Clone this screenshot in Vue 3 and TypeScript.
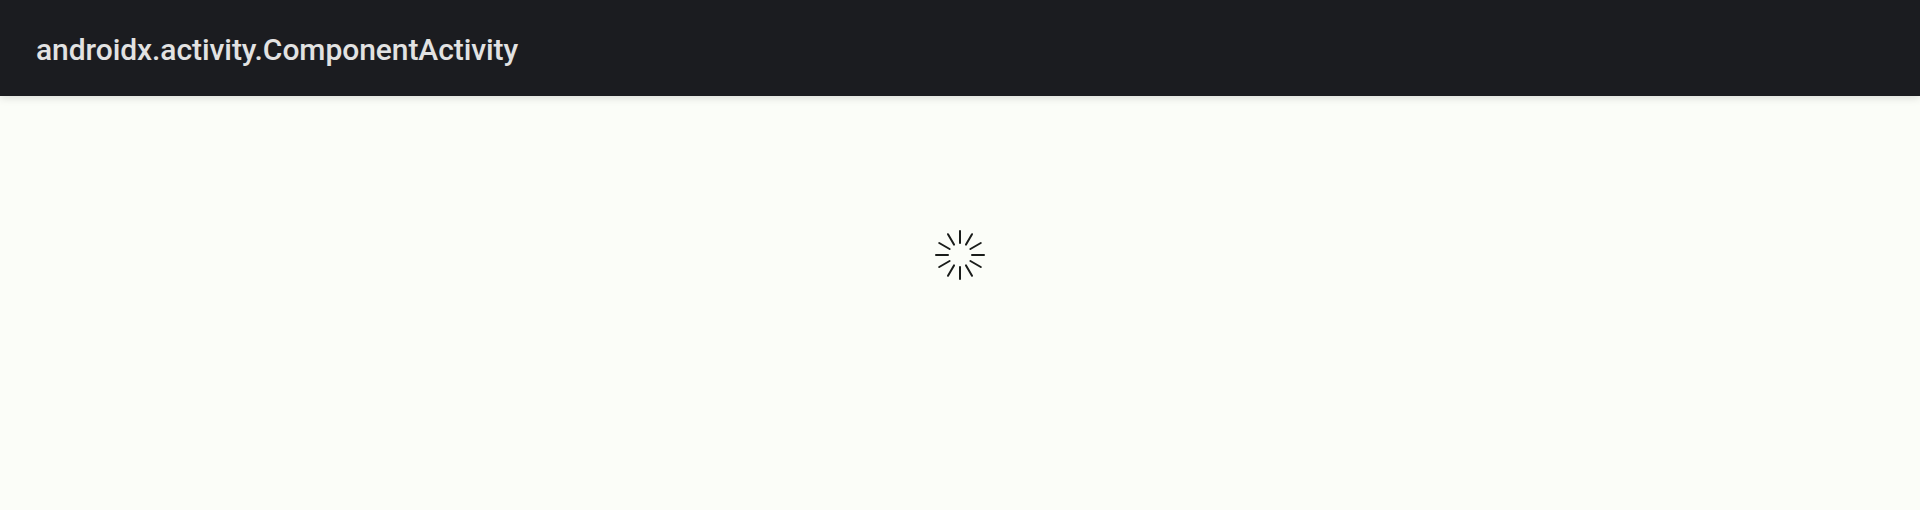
<script setup lang="ts">
const angles: number[] = Array.from({ length: 12 }, (_, i) => i * 30)
</script>

<template>
  <div class="screen">
    <header class="bar"><h1 class="title">androidx.activity.ComponentActivity</h1></header>
    <main class="content">
      <svg class="spinner" width="52" height="52" viewBox="-26 -26 52 52" aria-label="Loading">
        <line v-for="a in angles" :key="a" x1="0" y1="-12" x2="0" y2="-24" :transform="`rotate(${a})`" stroke="#191c1a" stroke-width="2" stroke-linecap="round" />
      </svg>
    </main>
  </div>
</template>

<style scoped>
.screen { display: flex; flex-direction: column; height: 510px; background: #fbfdf8; }
.bar { display: flex; align-items: center; box-sizing: border-box; height: 96px; padding: 3px 36px 0; background: #1b1c20; box-shadow: 0 2px 8px rgba(0, 0, 0, 0.13); }
.title { margin: 0; font: 500 30px/35px Roboto, sans-serif; letter-spacing: -0.07px; color: #e2e2e2; }
.content { display: flex; flex: 1; justify-content: center; align-items: flex-start; padding-top: 133px; }
.spinner { display: block; }
</style>
